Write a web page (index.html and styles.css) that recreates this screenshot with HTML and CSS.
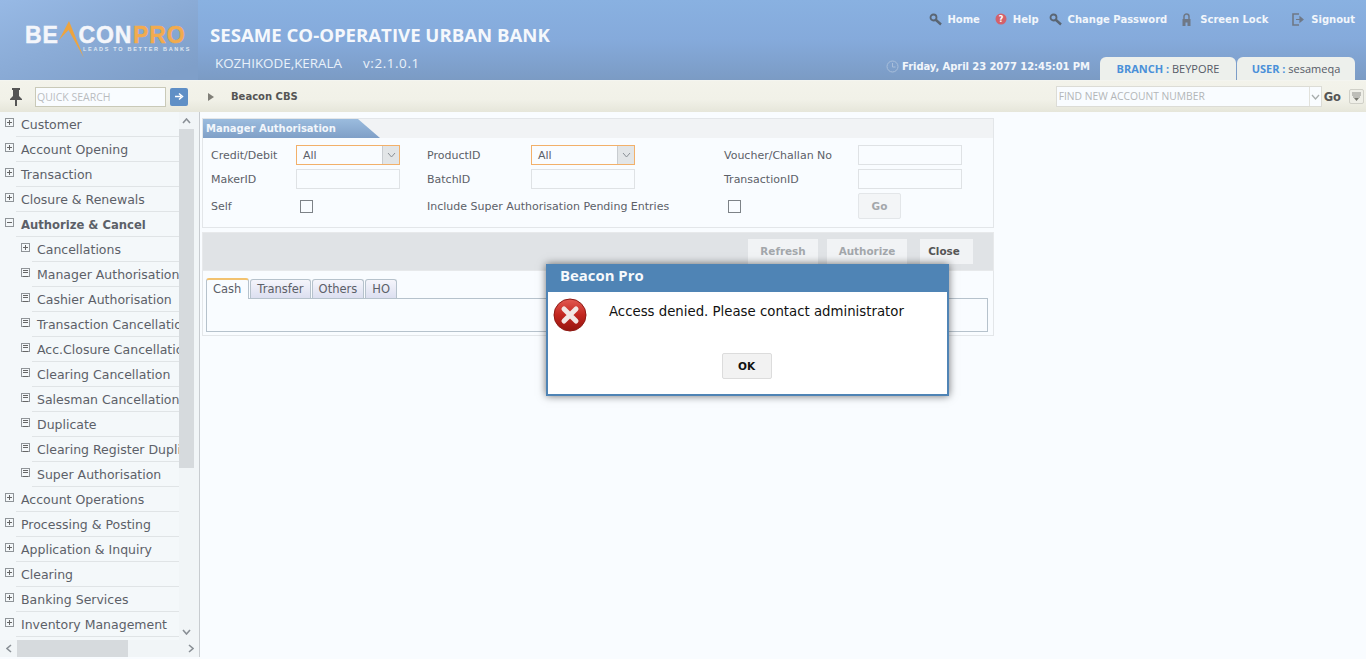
FILE: index.html
```html
<!DOCTYPE html>
<html lang="en">
<head>
  <meta charset="UTF-8">
  <meta name="viewport" content="width=device-width, initial-scale=1.0">
  <title>Beacon Pro</title>
  <link rel="stylesheet" href="styles.css">
</head>
<body>
  <header class="top">
    <div class="logo-box">
      <div class="logo">
        <span class="logo-word">BE<svg class="logo-peak" width="26" height="37" viewBox="0 0 26 37"><path d="M10 0 L0 19 L9.5 9 L25 37 Z" fill="#eda43f"/></svg>CON<b>PRO</b></span>
        <span class="logo-tag">LEADS TO BETTER BANKS</span>
      </div>
    </div>
    <div class="bank">
      <div class="bank-name">SESAME CO-OPERATIVE URBAN BANK</div>
      <div class="bank-place"><span>KOZHIKODE,KERALA</span><span>v:2.1.0.1</span></div>
    </div>
    <div class="top-right">
      <nav class="links">
        <a class="link-home"><svg width="13" height="13" viewBox="0 0 13 13"><circle cx="4.5" cy="4.5" r="3" fill="none" stroke="#5a6572" stroke-width="1.8"/><path d="M7 7 L12 11.5" stroke="#5a6572" stroke-width="2.4"/></svg>Home</a>
        <a class="link-help"><svg width="12" height="12" viewBox="0 0 12 12"><circle cx="6" cy="6" r="5.5" fill="#d4616a"/><text x="6" y="9" font-size="8" font-weight="700" font-family="DejaVu Sans" text-anchor="middle" fill="#fff">?</text></svg>Help</a>
        <a class="link-pass"><svg width="13" height="13" viewBox="0 0 13 13"><circle cx="4.5" cy="4.5" r="3" fill="none" stroke="#5a6572" stroke-width="1.8"/><path d="M7 7 L12 11.5" stroke="#5a6572" stroke-width="2.4"/></svg>Change Password</a>
        <a class="link-lock"><svg width="9" height="13" viewBox="0 0 9 13"><path d="M2 6 V3.5 a2.5 2.5 0 0 1 5 0 V6" fill="none" stroke="#6f7886" stroke-width="1.5"/><path d="M0.5 6 H8.5 V13 H5.5 V9.5 H3.5 V13 H0.5 Z" fill="#6f7886"/></svg>Screen Lock</a>
        <a class="link-out"><svg width="12" height="13" viewBox="0 0 12 13"><path d="M7 1 H1 V12 H7" fill="none" stroke="#6f7886" stroke-width="1.6"/><path d="M4 6.5 H8 M8 4 L11 6.5 L8 9 Z" fill="#6f7886" stroke="#6f7886" stroke-width="1.2"/></svg>Signout</a>
      </nav>
      <div class="status">
        <div class="clock"><svg width="13" height="13" viewBox="0 0 13 13"><circle cx="6.5" cy="6.5" r="5.5" fill="none" stroke="#a9bfdb" stroke-width="1"/><path d="M6.5 3 V7 H9.5" fill="none" stroke="#a9bfdb"/></svg>Friday, April 23 2077 12:45:01 PM</div>
        <div class="info-tab tab-branch"><b>BRANCH :</b> BEYPORE</div>
        <div class="info-tab tab-user"><b>USER :</b> sesameqa</div>
      </div>
    </div>
  </header>

  <div class="toolbar">
    <div class="quick">
      <svg class="pin" width="14" height="18" viewBox="0 0 14 18"><path d="M3 0 H11 V2 H10 V8 L13 11 V12 H8 V18 H6 V12 H1 V11 L4 8 V2 H3 Z" fill="#555"/></svg>
      <div class="quick-input">QUICK SEARCH</div>
      <div class="quick-btn"><svg width="9" height="9" viewBox="0 0 9 9"><path d="M0 4.5 H6 M4 1.5 L7.5 4.5 L4 7.5" fill="none" stroke="#fff" stroke-width="1.5"/></svg></div>
    </div>
    <div class="crumb"><span class="crumb-arrow"></span>Beacon CBS</div>
    <div class="find">
      <div class="find-box"><span>FIND NEW ACCOUNT NUMBER</span><i><svg width="9" height="6" viewBox="0 0 9 6"><path d="M1 1 L4.5 5 L8 1" fill="none" stroke="#a8adad" stroke-width="1.3"/></svg></i></div>
      <span class="find-go">Go</span>
      <div class="find-menu"><svg width="9" height="9" viewBox="0 0 9 9"><path d="M0 1 H9 M0 3 H9 M1 5 H8" stroke="#8c8c88"/><path d="M2 6 H7 L4.5 9 Z" fill="#77776f"/></svg></div>
    </div>
  </div>

  <div class="body-row">
    <aside class="side">
      <div class="side-main">
        <ul class="menu">
          <li><i class="ico plus"></i>Customer</li>
          <li><i class="ico plus"></i>Account Opening</li>
          <li><i class="ico plus"></i>Transaction</li>
          <li><i class="ico plus"></i>Closure &amp; Renewals</li>
          <li class="open"><i class="ico minus"></i>Authorize &amp; Cancel</li>
          <li class="sub"><i class="ico plus"></i>Cancellations</li>
          <li class="sub"><i class="ico leaf"></i>Manager Authorisation</li>
          <li class="sub"><i class="ico leaf"></i>Cashier Authorisation</li>
          <li class="sub"><i class="ico leaf"></i>Transaction Cancellation</li>
          <li class="sub"><i class="ico leaf"></i>Acc.Closure Cancellation</li>
          <li class="sub"><i class="ico leaf"></i>Clearing Cancellation</li>
          <li class="sub"><i class="ico leaf"></i>Salesman Cancellation</li>
          <li class="sub"><i class="ico leaf"></i>Duplicate</li>
          <li class="sub"><i class="ico leaf"></i>Clearing Register Duplicate</li>
          <li class="sub"><i class="ico leaf"></i>Super Authorisation</li>
          <li><i class="ico plus"></i>Account Operations</li>
          <li><i class="ico plus"></i>Processing &amp; Posting</li>
          <li><i class="ico plus"></i>Application &amp; Inquiry</li>
          <li><i class="ico plus"></i>Clearing</li>
          <li><i class="ico plus"></i>Banking Services</li>
          <li><i class="ico plus"></i>Inventory Management</li>
        </ul>
        <div class="vbar">
          <div class="vbar-btn"><svg width="9" height="6" viewBox="0 0 9 6"><path d="M1 5 L4.5 1 L8 5" fill="none" stroke="#8a9096" stroke-width="1.6"/></svg></div>
          <div class="vbar-track"><div class="vbar-thumb"></div></div>
          <div class="vbar-btn"><svg width="9" height="6" viewBox="0 0 9 6"><path d="M1 1 L4.5 5 L8 1" fill="none" stroke="#8a9096" stroke-width="1.6"/></svg></div>
        </div>
      </div>
      <div class="hbar">
        <div class="hbar-btn"><svg width="6" height="9" viewBox="0 0 6 9"><path d="M5 1 L1 4.5 L5 8" fill="none" stroke="#8a9096" stroke-width="1.6"/></svg></div>
        <div class="hbar-track"><div class="hbar-thumb"></div></div>
        <div class="hbar-btn"><svg width="6" height="9" viewBox="0 0 6 9"><path d="M1 1 L5 4.5 L1 8" fill="none" stroke="#8a9096" stroke-width="1.6"/></svg></div>
      </div>
    </aside>

    <main class="content">
      <section class="panel">
        <div class="panel-head"><div class="panel-title">Manager Authorisation</div></div>
        <div class="form">
          <label>Credit/Debit</label>
          <div class="select"><span>All</span><i><svg width="9" height="6" viewBox="0 0 9 6"><path d="M1 1 L4.5 5 L8 1" fill="none" stroke="#8a9096" stroke-width="1"/></svg></i></div>
          <label>ProductID</label>
          <div class="select"><span>All</span><i><svg width="9" height="6" viewBox="0 0 9 6"><path d="M1 1 L4.5 5 L8 1" fill="none" stroke="#8a9096" stroke-width="1"/></svg></i></div>
          <label>Voucher/Challan No</label>
          <div class="field"></div>

          <label>MakerID</label>
          <div class="field"></div>
          <label>BatchID</label>
          <div class="field"></div>
          <label>TransactionID</label>
          <div class="field"></div>

          <label>Self</label>
          <div class="check-cell"><span class="check"></span></div>
          <label class="wide">Include Super Authorisation Pending Entries</label>
          <div class="check-cell"><span class="check"></span></div>
          <div class="btn-go">Go</div>
        </div>
      </section>

      <div class="actions">
        <div class="act off">Refresh</div>
        <div class="act off act-auth">Authorize</div>
        <div class="act act-close">Close</div>
      </div>

      <section class="tabs-panel">
        <div class="tabs">
          <div class="tab active">Cash</div>
          <div class="tab">Transfer</div>
          <div class="tab">Others</div>
          <div class="tab">HO</div>
        </div>
        <div class="tab-body"></div>
      </section>
    </main>
  </div>

  <div class="dialog">
    <div class="dialog-title">Beacon Pro</div>
    <div class="dialog-body">
      <div class="dialog-msg">
        <svg class="err" width="34" height="34" viewBox="0 0 34 34">
          <defs><linearGradient id="errFill" x1="0" y1="0" x2="0" y2="1"><stop offset="0" stop-color="#e25a52"/><stop offset=".5" stop-color="#c3261f"/><stop offset="1" stop-color="#96150f"/></linearGradient></defs>
          <circle cx="17" cy="17" r="16" fill="url(#errFill)" stroke="#8e1a14"/>
          <path d="M11 11 L23 23 M23 11 L11 23" stroke="#f2e6e4" stroke-width="5" stroke-linecap="round"/>
        </svg>
        <span>Access denied. Please contact administrator</span>
      </div>
      <div class="dialog-foot"><div class="ok">OK</div></div>
    </div>
  </div>
</body>
</html>
```

FILE: styles.css
```css
* {
  box-sizing: border-box;
}
html, body {
  height: 100%;
}
body {
  margin: 0;
  overflow: hidden;
  background: #f9fcff;
  font-family: "DejaVu Sans", Verdana, sans-serif;
  font-size: 12px;
  color: #5c6068;
}

/* Header */
.top {
  display: flex;
  height: 80px;
  background: linear-gradient(#89b1e1, #85aadb 50%, #7b9bc4);
}
.logo-box {
  width: 198px;
  padding: 24px 0 0 25px;
  background: linear-gradient(160deg, #97b9e5, #7f9fc9 90%);
  flex: none;
}
.logo {
  display: flex;
  flex-direction: column;
}
.logo-word {
  display: flex;
  height: 22px;
  font-family: "Liberation Sans", sans-serif;
  font-size: 23px;
  font-weight: 700;
  line-height: 22px;
  letter-spacing: .8px;
  -webkit-text-stroke: .5px currentColor;
  color: #f4f6fb;
}
.logo-word b {
  margin-left: 1px;
  color: #f2ab4e;
}
.logo-peak {
  flex: none;
  margin: -3px -6px -12px 0;
}
.logo-tag {
  margin-left: 58px;
  font-family: "Liberation Sans", sans-serif;
  font-size: 5.5px;
  font-weight: 700;
  line-height: 6px;
  letter-spacing: 1.7px;
  color: #dfe7f2;
  white-space: nowrap;
}
.bank {
  padding: 23px 0 0 12px;
  color: #f5f8fc;
}
.bank-name {
  font-family: "Open Sans", sans-serif;
  font-size: 18.6px;
  font-weight: 700;
  line-height: 23px;
  white-space: nowrap;
}
.bank-place {
  display: flex;
  gap: 21px;
  margin: 8px 0 0 5px;
  font-family: "Open Sans", sans-serif;
  font-size: 13.4px;
  line-height: 18px;
  color: #e9f1fa;
}
.bank-place span + span {
  letter-spacing: .6px;
}
.top-right {
  margin-left: auto;
  display: flex;
  flex-direction: column;
  justify-content: space-between;
  padding-right: 11px;
}
.links {
  display: flex;
  justify-content: flex-end;
  padding-top: 12px;
  font-size: 10px;
  font-weight: 700;
  color: #f2f6fb;
  white-space: nowrap;
}
.links a {
  display: flex;
  align-items: center;
  gap: 5px;
  height: 14px;
}
.link-help { margin-left: 15px; gap: 6px !important; }
.link-pass { margin-left: 10px; gap: 6px !important; }
.link-lock { margin-left: 15px; gap: 9px !important; }
.link-out { margin-left: 24px; gap: 7px !important; }
.status {
  display: flex;
  align-items: flex-end;
}
.clock {
  display: flex;
  align-items: center;
  gap: 3px;
  height: 21px;
  margin-bottom: 3px;
  font-size: 10px;
  font-weight: 700;
  letter-spacing: -.08px;
  color: #f2f6fb;
  white-space: nowrap;
}
.info-tab {
  height: 23px;
  margin-left: 1px;
  padding-top: 4px;
  border-radius: 6px 6px 0 0;
  background: #edf0ec;
  text-align: center;
  font-family: "Open Sans", sans-serif;
  font-size: 11px;
  line-height: 15px;
  color: #555a66;
  white-space: nowrap;
}
.info-tab b {
  color: #4a90d9;
}
.tab-branch { width: 136px; margin-left: 10px; }
.tab-user { width: 118px; }

/* Toolbar */
.toolbar {
  display: flex;
  align-items: center;
  height: 32px;
  border-top: 1px solid #f4f5f0;
  background: linear-gradient(#f3f3eb, #f1f1e8 60%, #e6e6da);
}
.quick {
  display: flex;
  align-items: center;
  width: 199px;
  padding-left: 9px;
  flex: none;
}
.pin {
  flex: none;
}
.quick-input {
  width: 131px;
  height: 20px;
  margin-left: 12px;
  padding-left: 1px;
  border: 1px solid #c9c9b8;
  background: #f9fcff;
  font-family: "Open Sans", sans-serif;
  font-size: 10.5px;
  line-height: 19px;
  color: #b9bcbf;
}
.quick-btn {
  display: flex;
  align-items: center;
  justify-content: center;
  width: 18px;
  height: 18px;
  margin-left: 4px;
  border-radius: 2px;
  background: #5f8fc6;
}
.crumb {
  display: flex;
  align-items: center;
  padding-left: 9px;
  font-size: 10px;
  font-weight: 700;
  color: #555;
}
.crumb-arrow {
  width: 0;
  height: 0;
  margin-right: 17px;
  border-left: 6px solid #807f78;
  border-top: 4px solid transparent;
  border-bottom: 4px solid transparent;
}
.find {
  display: flex;
  align-items: center;
  margin-left: auto;
  padding-right: 2px;
}
.find-box {
  display: flex;
  width: 266px;
  height: 21px;
  border: 1px solid #dcdcd6;
  background: #f9fcff;
  font-family: "Open Sans", sans-serif;
  font-size: 10.3px;
  line-height: 19px;
  color: #b3b6b8;
}
.find-box span {
  flex: 1;
  padding-left: 2px;
}
.find-box i {
  display: flex;
  align-items: center;
  justify-content: center;
  width: 12px;
  border-left: 1px solid #e2e2dc;
}
.find-go {
  margin-left: 2px;
  font-size: 11.5px;
  font-weight: 700;
  color: #555;
}
.find-menu {
  display: flex;
  align-items: center;
  justify-content: center;
  width: 15px;
  height: 15px;
  margin-left: 8px;
  border: 1px solid #d0d0c8;
  border-radius: 2px;
  background: #efefe8;
}

/* Sidebar */
.body-row {
  display: flex;
  height: 545px;
}
.side {
  display: flex;
  flex-direction: column;
  width: 200px;
  flex: none;
  border-right: 1px solid #c8ccd0;
  background: #f1f5f7;
}
.side-main {
  display: flex;
  height: 528px;
  flex: none;
}
.menu {
  width: 179px;
  margin: 0;
  padding: 0;
  flex: none;
  overflow: hidden;
  list-style: none;
  background: #f4f8fa;
}
.menu li {
  position: relative;
  height: 25px;
  margin-left: 16px;
  padding-left: 5px;
  border-bottom: 1px solid #e0e4e6;
  line-height: 26px;
  font-size: 12.5px;
  white-space: nowrap;
}
.menu li.sub {
  margin-left: 32px;
}
.menu li.open {
  font-size: 11.6px;
  font-weight: 700;
}
.ico {
  position: absolute;
  left: -11px;
  top: 6px;
  width: 9px;
  height: 9px;
  border: 1px solid #8f9498;
  background: #f4f8fa;
}
.plus::before, .minus::before {
  content: "";
  position: absolute;
  left: 1px;
  right: 1px;
  top: 3px;
  height: 1px;
  background: #666;
}
.plus::after {
  content: "";
  position: absolute;
  top: 1px;
  bottom: 1px;
  left: 3px;
  width: 1px;
  background: #666;
}
.leaf::before {
  content: "";
  position: absolute;
  left: 1px;
  right: 1px;
  top: 1px;
  height: 5px;
  border-top: 1px solid #666;
  border-bottom: 1px solid #666;
  background: linear-gradient(transparent 1px, #666 1px, #666 2px, transparent 2px);
}
.vbar {
  display: flex;
  flex-direction: column;
  width: 15px;
  flex: none;
  background: #f1f5f7;
}
.vbar-btn {
  display: flex;
  align-items: center;
  justify-content: center;
  height: 17px;
  flex: none;
}
.vbar-track {
  flex: 1;
}
.vbar-thumb {
  height: 339px;
  background: #d6dadd;
}
.hbar {
  display: flex;
  height: 17px;
}
.hbar-btn {
  display: flex;
  align-items: center;
  justify-content: center;
  width: 17px;
  flex: none;
}
.hbar-track {
  flex: 1;
}
.hbar-thumb {
  width: 111px;
  height: 100%;
  background: #d6dadd;
}

/* Main content */
.content {
  width: 794px;
  padding: 6px 0 0 2px;
  flex: none;
}
.panel {
  width: 792px;
  height: 110px;
  border: 1px solid #e3e6e9;
}
.panel-head {
  height: 19px;
  background: #f1f3f5;
}
.panel-title {
  width: 177px;
  height: 19px;
  padding-left: 3px;
  clip-path: polygon(0 0, 155px 0, 177px 100%, 0 100%);
  background: linear-gradient(#9bbcde, #7f9fc7);
  font-size: 10px;
  font-weight: 700;
  line-height: 19px;
  color: #f2f6fb;
}
.form {
  display: grid;
  grid-template-columns: 85px 131px 104px 193px 134px 104px;
  grid-template-rows: 20px 20px 26px;
  row-gap: 4px;
  padding: 7px 0 0 8px;
}
.form label {
  align-self: center;
  font-size: 11px;
  white-space: nowrap;
}
.form label.wide {
  grid-column: span 2;
}
.select {
  display: flex;
  width: 104px;
  border: 1px solid #f2b06a;
  background: #f9fcff;
}
.select span {
  flex: 1;
  padding-left: 6px;
  font-size: 11px;
  line-height: 19px;
}
.select i {
  display: flex;
  align-items: center;
  justify-content: center;
  width: 17px;
  background: #e2e5e7;
  border-left: 1px solid #c8ccd0;
}
.field {
  width: 104px;
  border: 1px solid #dfe2e5;
  background: #f9fcff;
}
.check-cell {
  display: flex;
  align-items: center;
  padding-left: 4px;
}
.check {
  width: 13px;
  height: 13px;
  border: 1px solid #7d8287;
}
.btn-go {
  width: 43px;
  border: 1px solid #e3e6e9;
  border-radius: 2px;
  background: #f3f5f7;
  text-align: center;
  font-size: 10.5px;
  font-weight: 600;
  line-height: 24px;
  color: #a3a7ab;
  grid-column: 6;
}
.actions {
  display: flex;
  align-items: flex-start;
  justify-content: flex-end;
  width: 792px;
  height: 39px;
  margin-top: 4px;
  padding: 6px 20px 0 0;
  border: 1px solid #e7e9eb;
  background: #e0e3e6;
}
.act {
  height: 25px;
  background: #f1f3f5;
  text-align: center;
  font-size: 10.4px;
  font-weight: 700;
  line-height: 25px;
  color: #555;
}
.act.off {
  width: 70px;
  color: #a3a7ab;
}
.act-auth {
  width: 80px !important;
  margin-left: 9px;
}
.act-close {
  width: 53px;
  margin-left: 13px;
  padding-right: 5px;
}
.tabs-panel {
  width: 792px;
  height: 65px;
  padding: 6px 5px 0 3px;
  border: 1px solid #e3e6e9;
  border-top: 0;
}
.tabs {
  display: flex;
  gap: 1px;
  height: 21px;
  align-items: flex-end;
}
.tab {
  height: 19px;
  padding: 0 6px;
  border: 1px solid #b6c2cc;
  border-bottom: 0;
  border-radius: 3px 3px 0 0;
  background: linear-gradient(#f5f5fb, #dcdff0);
  font-size: 11.5px;
  line-height: 18px;
}
.tab.active {
  height: 21px;
  position: relative;
  top: 1px;
  padding-right: 7px;
  border-top: 2px solid #f2c26f;
  background: #f9fcff;
}
.tab-body {
  height: 34px;
  border: 1px solid #b6c2cc;
}

/* Message box */
.dialog {
  position: absolute;
  left: 546px;
  top: 264px;
  width: 403px;
  height: 132px;
  border: 2px solid #4f84b5;
  border-top: 0;
  background: #fff;
  box-shadow: 0 0 8px rgba(0, 0, 0, .55);
}
.dialog-title {
  height: 28px;
  margin: 0 -2px;
  padding-left: 14px;
  background: #4f84b5;
  font-family: "Open Sans", sans-serif;
  font-size: 14.9px;
  font-weight: 700;
  line-height: 23px;
  color: #f6f9fc;
}
.dialog-body {
  padding: 6px 0 0 5px;
}
.dialog-msg {
  display: flex;
  align-items: flex-start;
  font-size: 13.3px;
  color: #111;
}
.dialog-msg span {
  margin: 6px 0 0 22px;
}
.dialog-foot {
  display: flex;
  justify-content: center;
  margin-top: 21px;
  padding-right: 7px;
}
.ok {
  width: 50px;
  height: 26px;
  border: 1px solid #dcdcdc;
  border-radius: 2px;
  background: #f2f2f2;
  text-align: center;
  font-size: 10.5px;
  font-weight: 700;
  line-height: 25px;
  color: #111;
}
```
